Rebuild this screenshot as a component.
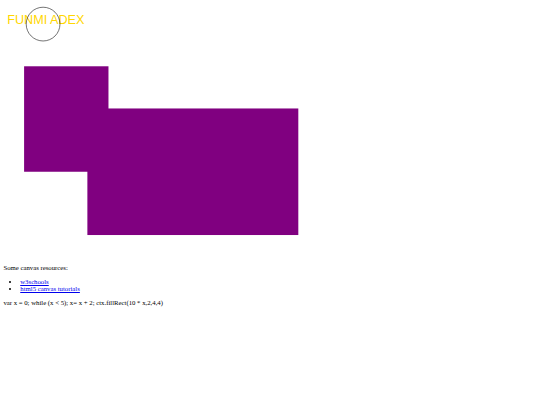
import React from "react";

export default function App() {
  return (
    <div className="m-[3.375px] font-['Liberation_Serif',serif] text-[6.75px] leading-[normal] text-black">
      <div>
        <svg
          width="337.5"
          height="253.125"
          viewBox="0 0 800 600"
          className="inline align-baseline"
        >
          <rect x="50" y="150" width="200" height="250" fill="#800080" />
          <rect x="200" y="250" width="500" height="300" fill="#800080" />
          <text
            x="10"
            y="50"
            fontFamily="'Liberation Sans', Arial, sans-serif"
            fontSize="30"
            fill="#ffd700"
          >
            FUNMI ADEX
          </text>
          <circle cx="95" cy="50" r="40" fill="none" stroke="#000" strokeWidth="1.3" />
        </svg>
      </div>
      <p className="my-[6.75px]">Some canvas resources:</p>
      <ul className="list-disc pl-[16.875px] my-[6.75px]">
        <li>
          <a href="#" className="text-[#0000EE] underline">w3schools</a>
        </li>
        <li>
          <a href="#" className="text-[#0000EE] underline">html5 canvas tutorials</a>
        </li>
      </ul>
      <p className="my-[6.75px]">var x = 0; while (x &lt; 5); x= x + 2; ctx.fillRect(10 * x,2,4,4)</p>
    </div>
  );
}
